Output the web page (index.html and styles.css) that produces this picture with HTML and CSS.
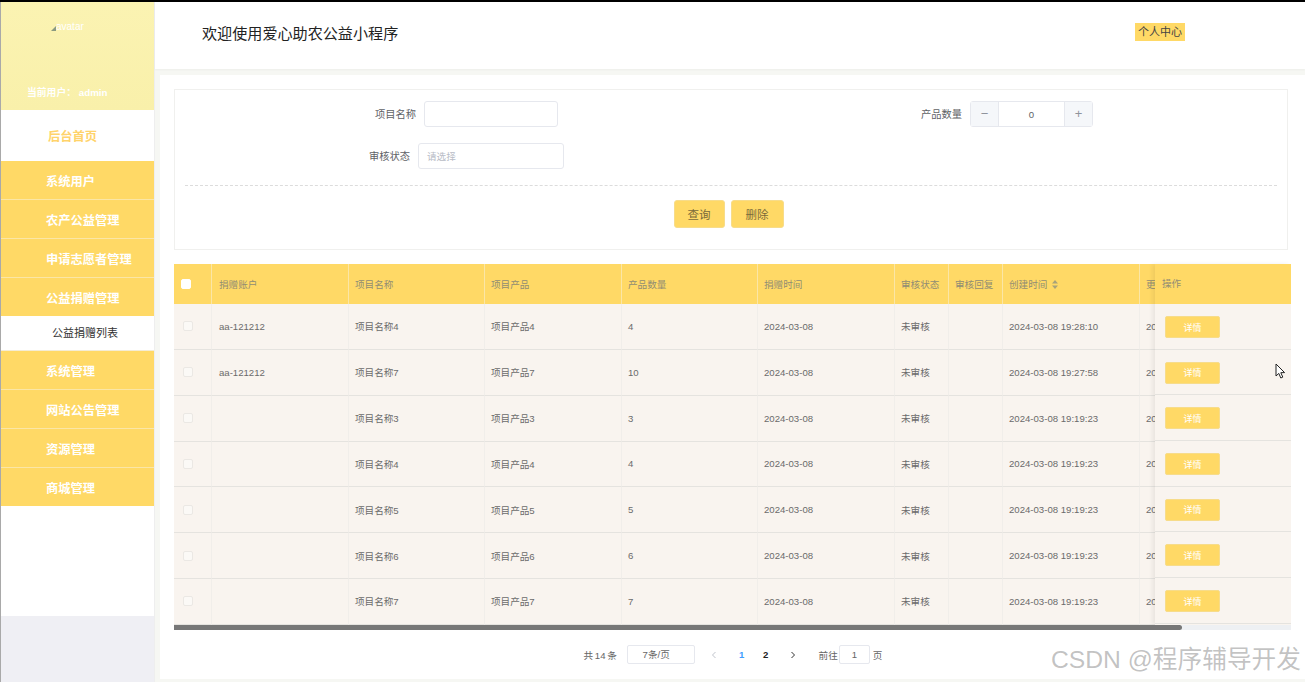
FILE: index.html
```html
<!DOCTYPE html>
<html lang="zh-CN">
<head>
<meta charset="utf-8">
<title>爱心助农公益小程序</title>
<link rel="stylesheet" href="styles.css">
</head>
<body>
<div class="app">
  <aside class="sidebar">
    <div class="profile">
      <div class="avatar"><svg class="broken" viewBox="0 0 5 5" width="5" height="5"><path d="M0 5 L5 0 V5 Z" fill="#8a9a80"/></svg><span>avatar</span></div>
      <div class="current">当前用户： admin</div>
    </div>
    <nav class="menu">
      <a class="home">后台首页</a>
      <a class="item">系统用户</a>
      <a class="item">农产公益管理</a>
      <a class="item">申请志愿者管理</a>
      <a class="item open">公益捐赠管理</a>
      <a class="sub">公益捐赠列表</a>
      <a class="item">系统管理</a>
      <a class="item">网站公告管理</a>
      <a class="item">资源管理</a>
      <a class="item">商城管理</a>
    </nav>
    <div class="side-foot"></div>
  </aside>
  <main class="main">
    <header class="topbar">
      <h1 class="title">欢迎使用爱心助农公益小程序</h1>
      <a class="center-link">个人中心</a>
    </header>
    <section class="content">
      <form class="search">
        <div class="row row-first">
          <div class="field">
            <label class="label">项目名称</label>
            <div class="input name-input"></div>
          </div>
          <div class="field qty-field">
            <label class="label">产品数量</label>
            <div class="stepper">
              <span class="step">−</span>
              <span class="step-val">0</span>
              <span class="step">+</span>
            </div>
          </div>
        </div>
        <div class="row row-second">
          <div class="field">
            <label class="label">审核状态</label>
            <div class="input select-input">请选择</div>
          </div>
        </div>
        <div class="actions">
          <button type="button" class="btn btn-query">查询</button>
          <button type="button" class="btn btn-del">删除</button>
        </div>
      </form>

      <div class="table-wrap">
        <div class="scroller">
          <table class="grid">
            <thead>
              <tr>
                <th class="c-check"><span class="check head-check"></span></th>
                <th class="c-w">捐赠账户</th>
                <th class="c-n">项目名称</th>
                <th class="c-w">项目产品</th>
                <th class="c-n">产品数量</th>
                <th class="c-w">捐赠时间</th>
                <th class="c-s">审核状态</th>
                <th class="c-s">审核回复</th>
                <th class="c-w">创建时间 <svg class="sort" viewBox="0 0 6 9" width="6" height="9"><path d="M3 0 L6 3.5 H0 Z M3 9 L0 5.5 H6 Z" fill="#a8a27a"/></svg></th>
                <th>更新时间</th>
              </tr>
            </thead>
            <tbody>
              <tr><td><span class="check"></span></td><td>aa-121212</td><td>项目名称4</td><td>项目产品4</td><td>4</td><td>2024-03-08</td><td>未审核</td><td></td><td>2024-03-08 19:28:10</td><td>2024-03-08</td></tr>
              <tr><td><span class="check"></span></td><td>aa-121212</td><td>项目名称7</td><td>项目产品7</td><td>10</td><td>2024-03-08</td><td>未审核</td><td></td><td>2024-03-08 19:27:58</td><td>2024-03-08</td></tr>
              <tr><td><span class="check"></span></td><td></td><td>项目名称3</td><td>项目产品3</td><td>3</td><td>2024-03-08</td><td>未审核</td><td></td><td>2024-03-08 19:19:23</td><td>2024-03-08</td></tr>
              <tr><td><span class="check"></span></td><td></td><td>项目名称4</td><td>项目产品4</td><td>4</td><td>2024-03-08</td><td>未审核</td><td></td><td>2024-03-08 19:19:23</td><td>2024-03-08</td></tr>
              <tr><td><span class="check"></span></td><td></td><td>项目名称5</td><td>项目产品5</td><td>5</td><td>2024-03-08</td><td>未审核</td><td></td><td>2024-03-08 19:19:23</td><td>2024-03-08</td></tr>
              <tr><td><span class="check"></span></td><td></td><td>项目名称6</td><td>项目产品6</td><td>6</td><td>2024-03-08</td><td>未审核</td><td></td><td>2024-03-08 19:19:23</td><td>2024-03-08</td></tr>
              <tr><td><span class="check"></span></td><td></td><td>项目名称7</td><td>项目产品7</td><td>7</td><td>2024-03-08</td><td>未审核</td><td></td><td>2024-03-08 19:19:23</td><td>2024-03-08</td></tr>
            </tbody>
          </table>
        </div>
        <div class="fixed-col">
          <div class="fixed-head">操作</div>
          <div class="fixed-cell"><button type="button" class="detail">详情</button></div>
          <div class="fixed-cell"><button type="button" class="detail">详情</button></div>
          <div class="fixed-cell"><button type="button" class="detail">详情</button></div>
          <div class="fixed-cell"><button type="button" class="detail">详情</button></div>
          <div class="fixed-cell"><button type="button" class="detail">详情</button></div>
          <div class="fixed-cell"><button type="button" class="detail">详情</button></div>
          <div class="fixed-cell"><button type="button" class="detail">详情</button></div>
        </div>
        <div class="track"><div class="thumb"></div></div>
      </div>

      <div class="pager">
        <span class="total">共 14 条</span>
        <span class="size">7条/页</span>
        <svg class="arrow prev" viewBox="0 0 6 8" width="6" height="8"><path d="M4.5 1 L1.5 4 L4.5 7" fill="none" stroke="#c0c4cc" stroke-width="1"/></svg>
        <span class="num active">1</span>
        <span class="num">2</span>
        <svg class="arrow next" viewBox="0 0 6 8" width="6" height="8"><path d="M1.5 1 L4.5 4 L1.5 7" fill="none" stroke="#333" stroke-width="1"/></svg>
        <span class="goto">前往</span>
        <span class="page-input">1</span>
        <span class="page-unit">页</span>
      </div>
    </section>
  </main>
</div>
<div class="watermark">CSDN @程序辅导开发</div>
<svg class="cursor" viewBox="0 0 11 16" width="11" height="16"><path d="M1 1 V13 L3.8 10.4 L5.8 15 L7.8 14.1 L5.8 9.7 L9.6 9.6 Z" fill="#fff" stroke="#222" stroke-width="1"/></svg>
</body>
</html>
```
FILE: styles.css
```css
* { box-sizing: border-box; }
html, body { margin: 0; height: 100%; }
body {
  width: 1305px;
  height: 682px;
  overflow: hidden;
  position: relative;
  border-top: 2px solid #000;
  background: #f6f7f3;
  font-family: "Liberation Sans", "Noto Sans CJK SC", sans-serif;
  font-size: 9.6px;
  color: #606266;
}
.app { display: flex; height: 680px; }

/* sidebar */
.sidebar {
  width: 155px;
  flex: none;
  display: flex;
  flex-direction: column;
  background: #fff;
  border-left: 1px solid #a9a9a9;
  border-right: 1px solid #eeeeee;
}
.profile {
  height: 108px;
  flex: none;
  background: linear-gradient(180deg, #fbf3b2 0%, #f9f0aa 100%);
  color: #fff;
  display: flex;
  flex-direction: column;
}
.avatar { display: flex; align-items: center; padding: 19px 0 0 50px; font-size: 10px; line-height: 12px; }
.broken { flex: none; margin-top: 3px; }
.current { margin-top: 53px; padding-left: 26px; font-size: 9.8px; font-weight: bold; line-height: 14px; }
.menu { flex: none; height: 396px; display: flex; flex-direction: column; }
.menu a { display: block; }
.home {
  height: 51px;
  line-height: 55px;
  padding-left: 47px;
  font-size: 12.25px;
  font-weight: bold;
  color: #ffd36b;
}
.item {
  height: 39px;
  line-height: 38px;
  padding: 2px 0 0 45px;
  font-size: 12.25px;
  font-weight: bold;
  color: #fff;
  background: #ffd966;
  border-bottom: 1px solid #fbe6a6;
}
.open { height: 38px; border-bottom: 0; }
.sub {
  height: 35px;
  line-height: 34px;
  padding-left: 51px;
  font-size: 11px;
  color: #333;
  background: #fff;
  border-bottom: 1px solid #f4ecd4;
}
.side-foot { flex: none; height: 110px; background: #fff; }
.sidebar::after { content: ""; flex: 1; background: #efeff4; }

/* main */
.main { flex: 1; min-width: 0; display: flex; flex-direction: column; }
.topbar {
  height: 67px;
  flex: none;
  background: #fff;
  display: flex;
  align-items: flex-start;
  justify-content: space-between;
  padding: 21px 120px 0 47px;
  box-shadow: 0 1px 2px rgba(0, 0, 0, .04);
}
.title { margin: 0; font-size: 15.1px; line-height: 22px; font-weight: normal; color: #222; }
.center-link {
  width: 50px;
  height: 18px;
  line-height: 19px;
  text-align: center;
  font-size: 11px;
  color: #444;
  background: #ffd966;
}
.content {
  flex: 1;
  margin: 6px 0 3px 5px;
  padding: 14px 14px 0;
  background: #fff;
}

/* search */
.search {
  height: 161px;
  margin-right: 3px;
  border: 1px solid #f0f0ee;
  padding: 11px 10px 0;
  display: flex;
  flex-direction: column;
}
.row { display: flex; height: 26px; }
.row-first { padding-left: 190px; }
.row-second { margin-top: 16px; padding-left: 184px; }
.field { display: flex; align-items: center; }
.qty-field { margin-left: 363px; }
.label { margin-right: 8px; padding-top: 2px; line-height: 26px; font-size: 10.25px; color: #606266; }
.input { height: 26px; border: 1px solid #e6e8ee; border-radius: 3px; background: #fff; }
.name-input { width: 134px; }
.select-input { width: 146px; padding-left: 8px; line-height: 26px; color: #b8bcc6; }
.stepper {
  width: 123px;
  height: 26px;
  display: flex;
  border: 1px solid #e6e8ee;
  border-radius: 3px;
}
.step {
  width: 27px;
  flex: none;
  text-align: center;
  line-height: 24px;
  font-size: 13px;
  color: #8f949c;
  background: #f5f7fa;
}
.step-val {
  flex: 1;
  text-align: center;
  line-height: 25px;
  color: #606266;
  border-left: 1px solid #e6e8ee;
  border-right: 1px solid #e6e8ee;
}
.actions {
  margin-top: 16px;
  padding: 14px 5px 0 0;
  border-top: 1px dashed #dcdcdc;
  display: flex;
  justify-content: center;
  gap: 6px;
}
.btn {
  height: 28px;
  border: 1px solid #f7dc8a;
  border-radius: 3px;
  background: #ffd966;
  color: #7a6a3a;
  font: 11.5px "Liberation Sans", "Noto Sans CJK SC", sans-serif;
  padding: 0;
}
.btn-query { width: 51px; }
.btn-del { width: 53px; }

/* table */
.table-wrap { position: relative; margin-top: 14px; width: 1117px; }
.scroller { overflow: hidden; height: 361px; background: #f9f4ef; }
.grid { width: 100%; table-layout: fixed; border-collapse: separate; border-spacing: 0; }
.grid th, .grid td {
  padding: 0 0 0 6px;
  text-align: left;
  white-space: nowrap;
  overflow: hidden;
  font-weight: normal;
  border-right: 1px solid #f1eeea;
}
.grid th {
  height: 40px;
  padding-bottom: 1px;
  background: #ffd966;
  color: #918d74;
  border-right-color: #fbe6a6;
}
.grid td { height: 45.85px; border-bottom: 1px solid #e5e3df; color: #6b6b6b; }
.grid th:first-child, .grid td:first-child,
.grid th:nth-child(2), .grid td:nth-child(2) { padding-left: 7px; }
.c-check { width: 38px; }
.c-w { width: 137px; }
.c-n { width: 136px; }
.c-s { width: 54px; }
.sort { margin-left: 2px; vertical-align: -1px; }
.check {
  display: block;
  width: 10px;
  height: 10px;
  margin-left: 2px;
  background: #fbf9f6;
  border: 1px solid #ebe8e4;
  border-radius: 2px;
}
.head-check { margin-left: 0; background: #fff; border-color: #fff; }

.fixed-col {
  position: absolute;
  top: 0;
  right: 0;
  width: 136px;
  height: 361px;
  background: #f9f4ef;
  box-shadow: -3px 0 4px rgba(0, 0, 0, .06);
}
.fixed-head {
  height: 40px;
  line-height: 39px;
  padding-left: 7px;
  background: #ffd966;
  color: #918d74;
}
.fixed-cell {
  height: 45.7px;
  padding: 12px 0 0 10px;
  border-bottom: 1px solid #e5e3df;
}
.detail {
  display: block;
  width: 55px;
  height: 22px;
  padding: 0;
  border: 1px solid #f7dc8a;
  border-radius: 2px;
  background: #ffd966;
  color: #fff;
  font: 9px "Liberation Sans", "Noto Sans CJK SC", sans-serif;
}
.track { position: relative; height: 5px; background: #eef0f3; }
.thumb { width: 1008px; height: 5px; background: #777; border-radius: 0 3px 3px 0; }

/* pagination */
.pager {
  display: flex;
  align-items: center;
  justify-content: center;
  width: 1118px;
  height: 19px;
  margin-top: 15px;
  color: #666;
}
.total { width: 33px; white-space: nowrap; word-spacing: -1px; }
.size {
  width: 68px;
  height: 19px;
  line-height: 17px;
  margin-left: 10px;
  padding-left: 15px;
  border: 1px solid #e6e8ee;
  border-radius: 2px;
}
.arrow { flex: none; }
.prev { margin-left: 16px; }
.num { width: 8px; text-align: center; margin-left: 16px; font-weight: bold; color: #222; }
.active { margin-left: 21px; color: #409eff; }
.next { margin-left: 20px; }
.goto { margin-left: 23px; }
.page-input {
  width: 31px;
  height: 19px;
  margin-left: 1px;
  line-height: 17px;
  text-align: center;
  border: 1px solid #e6e8ee;
  border-radius: 2px;
}
.page-unit { margin-left: 3px; }

/* overlays */
.watermark {
  position: absolute;
  right: 4px;
  top: 641px;
  font: 24.7px/34px "Liberation Sans", "Noto Sans CJK SC", sans-serif;
  color: rgba(120, 120, 120, .45);
  white-space: nowrap;
}
.cursor { position: absolute; left: 1275px; top: 361px; }
```
